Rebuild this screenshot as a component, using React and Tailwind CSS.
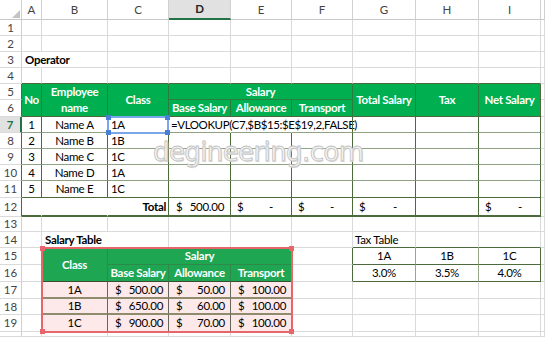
import React from 'react';

const RC = {
  g: 'border-r-[#dadada]',
  n: 'border-r-transparent',
  d: 'border-r-[#4d6a3d]',
  h: 'border-r-[#2b7c3f]',
  x: 'border-r-[#d0d0d0]',
  s: 'border-r-[#217346]',
  t: 'border-r-[#97a889]',
  v: 'border-r-[#66675a]',
  q: 'border-r-[#2f8a49]',
};
const BC = {
  g: 'border-b-[#dadada]',
  n: 'border-b-transparent',
  d: 'border-b-[#4d6a3d]',
  h: 'border-b-[#2b7c3f]',
  x: 'border-b-[#c8c8c8]',
  s: 'border-b-[#217346]',
  m: 'border-b-[#8fa283]',
  q: 'border-b-[#2f8a49]',
  k: 'border-b-[#3d4b32]',
  o: 'border-b-[#8e8c6c]',
};

function Cell({ t, r = 'g', b = 'g', c = '', s = '' }) {
  return (
    <div className={`flex items-center min-w-0 whitespace-nowrap border-r border-b ${RC[r]} ${BC[b]} ${s} ${c}`}>
      {t}
    </div>
  );
}

const HC = 'justify-center text-[#444] text-[11.5px] tracking-normal';
const H = (n, r = 'x', extra = '') => ({ t: n, r, b: 'g', c: `${HC} ${extra}` });
const X = { r: 'g', b: 'g' };
const emp = (n, o = {}) => Array.from({ length: n }, () => ({ ...o }));

const G = 'justify-center bg-[#00b050] text-white font-bold';
const SG = 'justify-center bg-[#1ea653] text-white font-bold';

const acc = (v) => ({
  t: (
    <>
      <span>$</span>
      <span>{v}</span>
    </>
  ),
  r: 'd',
  b: 'd',
  c: 'border-b-2 justify-between pl-[7px] pr-[6px]',
});
const dash = {
  t: (
    <>
      <span>$</span>
      <span>-</span>
    </>
  ),
  r: 'd',
  b: 'd',
  c: 'border-b-2 justify-between pl-[6px] pr-[18px]',
};

const sacc = (v, last, lastRow) => ({
  t: (
    <>
      <span>$</span>
      <span>{v}</span>
    </>
  ),
  r: last ? 'g' : 'v',
  b: lastRow ? 'g' : 'o',
  c: `justify-between pl-[7px] pr-[5px] bg-[#fde9e9] ${lastRow ? '' : 'border-b-2'}`,
});

const dataRow = (n, num, name, cls, last) => {
  const b = last ? 'd' : 'm';
  return [
    H(String(n), 'd'),
    { t: num, r: 'd', b, c: 'justify-center' },
    { t: name, r: 'd', b, c: 'justify-center' },
    { t: cls, r: 'd', b, c: 'pl-[3px]' },
    ...emp(6, { r: 'd', b }),
    X,
  ];
};

const salRow = (n, cls, a, bb, cc, lastRow) => [
  H(String(n)),
  {},
  { t: cls, r: 'v', b: lastRow ? 'g' : 'o', c: `justify-center bg-[#fde9e9] ${lastRow ? '' : 'border-b-2'}` },
  sacc(a, false, lastRow),
  sacc(bb, false, lastRow),
  sacc(cc, true, lastRow),
  ...emp(4),
  X,
];

const Corner = () => (
  <svg width="21" height="19" viewBox="0 0 21 19" className="absolute left-0 top-0">
    <polygon points="12,18 20,18 20,10" fill="#c4c4c4" />
  </svg>
);

const rows = [
  [
    { t: <Corner />, r: 'x', b: 'x', c: 'relative' },
    ...['A', 'B', 'C'].map((l) => ({ t: l, r: 'x', b: 'x', c: HC })),
    { t: 'D', r: 'x', b: 's', c: 'justify-center bg-[#e1e1e1] font-bold text-[#262626] text-[11.5px] border-b-2' },
    ...['E', 'F', 'G', 'H', 'I'].map((l) => ({ t: l, r: 'x', b: 'x', c: HC })),
    { r: 'x', b: 'x' },
  ],
  [H('1'), ...emp(9), X],
  [H('2'), ...emp(9), X],
  [H('3'), { t: 'Operator', r: 'n', c: 'font-bold pl-[3px]' }, ...emp(8), X],
  [H('4'), ...emp(9, { b: 'd' }), X],
  [
    H('5', 'd'),
    { t: 'No', s: 'row-span-2', r: 'h', b: 'd', c: G },
    {
      t: (
        <span className="text-center leading-[16px]">
          Employee
          <br />
          name
        </span>
      ),
      s: 'row-span-2',
      r: 'h',
      b: 'd',
      c: G,
    },
    { t: 'Class', s: 'row-span-2', r: 'h', b: 'd', c: G },
    { t: 'Salary', s: 'col-span-3', r: 'h', b: 'h', c: G },
    { t: 'Total Salary', s: 'row-span-2', r: 'h', b: 'd', c: G },
    { t: 'Tax', s: 'row-span-2', r: 'h', b: 'd', c: G },
    { t: 'Net Salary', s: 'row-span-2', r: 'd', b: 'd', c: G },
    X,
  ],
  [
    H('6', 'd'),
    { t: 'Base Salary', r: 'h', b: 'd', c: G },
    { t: 'Allowance', r: 'h', b: 'd', c: G },
    { t: 'Transport', r: 'h', b: 'd', c: G },
    X,
  ],
  [
    { t: '7', r: 's', b: 'g', c: 'justify-center bg-[#e1e1e1] text-[#217346] font-bold text-[11.5px] tracking-normal border-r-2' },
    { t: '1', r: 'd', b: 'm', c: 'justify-center' },
    { t: 'Name A', r: 'd', b: 'm', c: 'justify-center' },
    { t: '1A', r: 'd', b: 'm', c: 'pl-[3px]' },
    { t: '=VLOOKUP(C7,$B$15:$E$19,2,FALSE)', r: 'n', b: 'm', c: 'pl-[2px] tracking-[-0.4px]' },
    { r: 'n', b: 'm' },
    ...emp(4, { r: 'd', b: 'm' }),
    X,
  ],
  dataRow(8, '2', 'Name B', '1B'),
  dataRow(9, '3', 'Name C', '1C'),
  dataRow(10, '4', 'Name D', '1A'),
  dataRow(11, '5', 'Name E', '1C', true),
  [
    H('12', 'd'),
    { r: 'n', b: 'd', c: 'border-b-2' },
    { r: 'n', b: 'd', c: 'border-b-2' },
    { t: 'Total', r: 'd', b: 'd', c: 'border-b-2 justify-end pr-[2px] font-bold' },
    acc('500.00'),
    dash,
    dash,
    dash,
    { r: 'd', b: 'd', c: 'border-b-2' },
    dash,
    X,
  ],
  [H('13'), ...emp(9), X],
  [
    H('14'),
    {},
    { t: 'Salary Table', r: 'n', c: 'font-bold pl-[3px]' },
    {},
    {},
    {},
    {},
    { t: 'Tax Table', b: 'd', c: 'pl-[2px]' },
    { b: 'd' },
    { b: 'd' },
    X,
  ],
  [
    H('15'),
    {},
    { t: 'Class', s: 'row-span-2', r: 'q', b: 'k', c: SG },
    { t: 'Salary', s: 'col-span-3', r: 'q', b: 'q', c: SG },
    { r: 'd' },
    { t: '1A', r: 't', b: 'd', c: 'justify-center' },
    { t: '1B', r: 't', b: 'd', c: 'justify-center' },
    { t: '1C', r: 'd', b: 'd', c: 'justify-center' },
    X,
  ],
  [
    H('16'),
    {},
    { t: 'Base Salary', r: 'q', b: 'k', c: SG },
    { t: 'Allowance', r: 'q', b: 'k', c: SG },
    { t: 'Transport', r: 'g', b: 'k', c: SG },
    { r: 'd' },
    { t: '3.0%', r: 't', b: 'd', c: 'justify-center' },
    { t: '3.5%', r: 't', b: 'd', c: 'justify-center' },
    { t: '4.0%', r: 'd', b: 'd', c: 'justify-center' },
    X,
  ],
  salRow(17, '1A', '500.00', '50.00', '100.00'),
  salRow(18, '1B', '650.00', '60.00', '100.00'),
  salRow(19, '1C', '900.00', '70.00', '100.00', true),
  [H(''), ...emp(9), X],
];

const Handle = ({ c }) => <div className={`absolute w-[5px] h-[5px] ${c}`} />;

export default function App() {
  return (
    <div className="relative w-[545px] h-[337px] overflow-hidden bg-white font-['Lato',sans-serif] text-[11.5px] tracking-[-0.3px] text-black">
      <div className="grid grid-cols-[22px_20px_66px_61px_62px_61px_61px_63px_63px_62px_4px] grid-rows-[20px_16px_16px_16px_16px_16px_17px_16px_16px_16px_16px_17px_19px_15px_16px_17px_17px_17px_16px_17px_5px]">
        {rows.flat().map((cell, i) => (
          <Cell key={i} {...cell} />
        ))}
      </div>

      {/* C7 reference highlight */}
      <div className="absolute left-[107px] top-[116px] w-[62px] h-[18px] border-2 border-[#7aa6ea]" />
      <Handle c="left-[106px] top-[115px] bg-[#4a7fd6]" />
      <Handle c="left-[165px] top-[115px] bg-[#4a7fd6]" />
      <Handle c="left-[106px] top-[130px] bg-[#4a7fd6]" />
      <Handle c="left-[165px] top-[130px] bg-[#4a7fd6]" />

      {/* Salary table reference highlight */}
      <div className="absolute left-[41px] top-[247px] w-[252px] h-[86px] border-2 border-[#e7666c]" />
      <Handle c="left-[40px] top-[246px] bg-[#e7666c]" />
      <Handle c="left-[289px] top-[246px] bg-[#e7666c]" />
      <Handle c="left-[40px] top-[329px] bg-[#e7666c]" />
      <Handle c="left-[289px] top-[329px] bg-[#e7666c]" />

      {/* watermark */}
      <div className="absolute left-[153px] top-[139px] font-['DejaVu_Sans',sans-serif] text-[26px] leading-none tracking-[-0.6px] text-[#f5f5f5] [-webkit-text-stroke:0.8px_#c2c2c2] [text-shadow:1px_1px_1px_#d8d8d8] pointer-events-none">
        degineering.com
      </div>
    </div>
  );
}
